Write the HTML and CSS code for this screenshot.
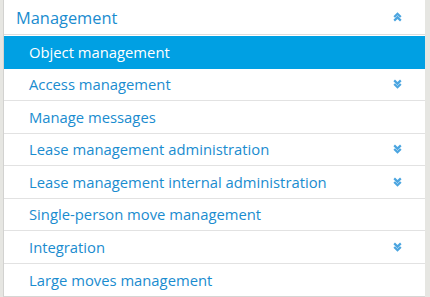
FILE: index.html
```html
<!DOCTYPE html>
<html lang="en">

<head>
  <meta charset="UTF-8" />
  <meta name="viewport" content="width=device-width, initial-scale=1.0" />
  <title>Management</title>
  <link rel="stylesheet" href="styles.css">
</head>

<body>
  <div class="panel">
    <div class="menu-header">
      <span>Management</span>
      <svg class="chevron" viewBox="0 0 9 10" width="9" height="10"><path d="M1.2 5 L4.5 1.8 L7.8 5 M1.2 8.6 L4.5 5.4 L7.8 8.6" /></svg>
    </div>
    <ul class="menu">
      <li class="active">Object management</li>
      <li>Access management <svg class="chevron" viewBox="0 0 9 10" width="9" height="10"><path d="M1.2 1.4 L4.5 4.6 L7.8 1.4 M1.2 5 L4.5 8.2 L7.8 5" /></svg></li>
      <li>Manage messages</li>
      <li>Lease management administration <svg class="chevron" viewBox="0 0 9 10" width="9" height="10"><path d="M1.2 1.4 L4.5 4.6 L7.8 1.4 M1.2 5 L4.5 8.2 L7.8 5" /></svg></li>
      <li>Lease management internal administration <svg class="chevron" viewBox="0 0 9 10" width="9" height="10"><path d="M1.2 1.4 L4.5 4.6 L7.8 1.4 M1.2 5 L4.5 8.2 L7.8 5" /></svg></li>
      <li>Single-person move management</li>
      <li>Integration <svg class="chevron" viewBox="0 0 9 10" width="9" height="10"><path d="M1.2 1.4 L4.5 4.6 L7.8 1.4 M1.2 5 L4.5 8.2 L7.8 5" /></svg></li>
      <li>Large moves management</li>
    </ul>
  </div>
</body>

</html>
```

FILE: styles.css
```css
body {
  margin: 0;
  background-color: #e6e6e2;
  font-family: "Open Sans", sans-serif;
  height: 297px;
  overflow: hidden;
}

.panel {
  margin-left: 3px;
  width: 421px;
  background-color: #ffffff;
  border-left: 1px solid #d2d2d0;
  border-bottom: 1px solid #d6d6d4;
}

.menu-header {
  display: flex;
  justify-content: space-between;
  align-items: center;
  height: 35px;
  padding: 0 23px 0 12px;
  border-bottom: 1px solid #dcdcdc;
  color: #1a8ccf;
  font-size: 16.4px;
  box-sizing: border-box;
  margin-bottom: 1px;
}

.chevron {
  fill: none;
  stroke: #4ba5e0;
  stroke-width: 2.2;
}

.menu {
  list-style: none;
  margin: 0;
  padding: 0;
}

.menu li {
  display: flex;
  justify-content: space-between;
  align-items: center;
  height: 32.5px;
  padding: 0 23px 0 25px;
  border-bottom: 1px solid #e2e2e2;
  color: #1a8ccf;
  font-size: 14.8px;
  box-sizing: border-box;
}

.menu li:last-child {
  border-bottom: none;
}

.menu li.active {
  background-color: #00a0e3;
  color: #ffffff;
  border-bottom: none;
}
```
